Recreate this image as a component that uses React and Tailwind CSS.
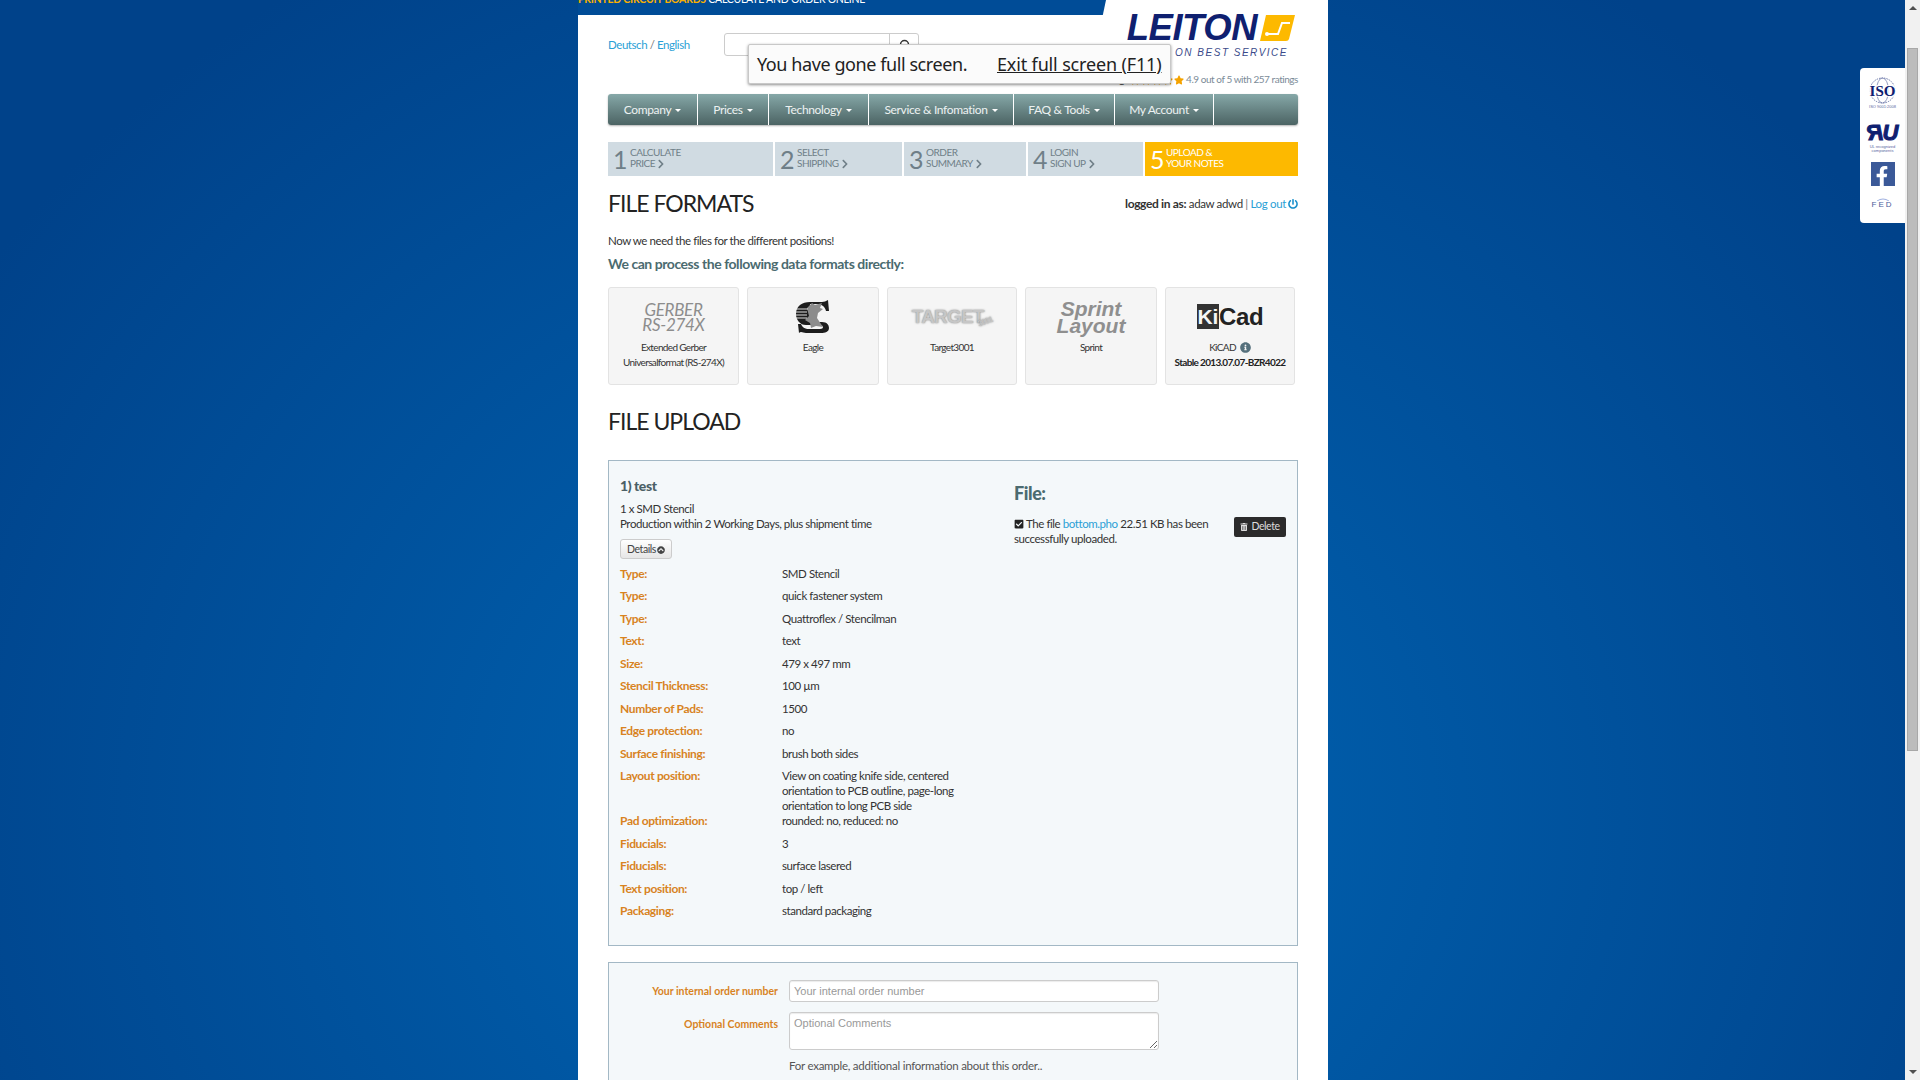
import React from 'react'
import { Search } from 'lucide-react'
import {
  FaCheckSquare,
  FaChevronCircleUp,
  FaChevronRight,
  FaFacebookF,
  FaInfoCircle,
  FaPowerOff,
  FaStar,
  FaTrashAlt,
} from 'react-icons/fa'

const navItems = [
  { label: 'Company', width: 'w-[90px]' },
  { label: 'Prices', width: 'w-[71px]' },
  { label: 'Technology', width: 'w-[100px]' },
  { label: 'Service & Infomation', width: 'w-[145px]' },
  { label: 'FAQ & Tools', width: 'w-[101px]' },
  { label: 'My Account', width: 'w-[99px]' },
]

const steps = [
  { num: 1, lines: ['Calculate', 'Price'], width: 'w-[165px]' },
  { num: 2, lines: ['Select', 'Shipping'], width: 'w-[127px]' },
  { num: 3, lines: ['Order', 'Summary'], width: 'w-[122px]' },
  { num: 4, lines: ['Login', 'Sign up'], width: 'w-[115px]' },
]

const details = [
  ['Type:', 'SMD Stencil'],
  ['Type:', 'quick fastener system'],
  ['Type:', 'Quattroflex / Stencilman'],
  ['Text:', 'text'],
  ['Size:', '479 x 497 mm'],
  ['Stencil Thickness:', '100 µm'],
  ['Number of Pads:', '1500'],
  ['Edge protection:', 'no'],
  ['Surface finishing:', 'brush both sides'],
  ['Layout position:', 'View on coating knife side, centered orientation to PCB outline, page-long orientation to long PCB side'],
  ['Pad optimization:', 'rounded: no, reduced: no'],
  ['Fiducials:', '3'],
  ['Fiducials:', 'surface lasered'],
  ['Text position:', 'top / left'],
  ['Packaging:', 'standard packaging'],
]

const EagleLogo = () => (
  <svg width="34" height="34" viewBox="0 0 34 34">
    <path d="M32 0 L33 11 L30 11 C29 7 26 4 21 4 L14 4 L13 22 L26 22 C31 22 33 25 33 28 C33 32 29 33 25 33 L10 33 C7 33 5 31 3 33 L2 24 L5 24 C6 27 9 29 13 29 L24 29 C26 29 27 28 27 27 C27 26 26 25 24 25 L10 25 C4 25 0 20 0 14 C0 6 6 2 14 2 L26 2 C28 2 30 1 32 0 Z" fill="#1d1d1d" />
    <path d="M11 8 L16 3 L19 5 L26 3 L24 8 L27 9 L22 13 L21 18 L27 27 L20 26 L15 28 L14 23 L9 20 L13 16 Z" fill="#8c8c8c" />
    <path d="M0 9 H12 M0 12 H11 M0 15 H11 M0 18 H11" stroke="#f5f5f5" strokeWidth="0.9" />
  </svg>
)

const LeitonMark = () => (
  <svg width="35" height="26" viewBox="0 0 35 26">
    <path d="M6 0 H35 L29 24 Q28.5 26 26 26 H0 Z" fill="#fdb900" />
    <path d="M30 8 H22 L18 19 H8" fill="none" stroke="#fff" strokeWidth="2" />
    <circle cx="7" cy="19" r="2" fill="#fff" />
  </svg>
)

const FormatCard = ({ logo, children, width }) => (
  <div className={`${width} h-[98px] flex flex-col items-center bg-[#f5f5f5] border border-[#e3e3e3] rounded-[3px] text-[10px] tracking-[-0.65px] leading-[15px] text-[#333]`}>
    <div className="h-[51px] w-full flex items-center justify-center pt-[6px]">{logo}</div>
    <div className="mt-[1px] text-center">{children}</div>
  </div>
)

const App = () => {
  return (
    <div className="h-screen w-full overflow-hidden flex font-['Lato',sans-serif] tracking-[-0.43px] text-[11.5px] text-[#333]">
      <main className="relative flex-1 h-full overflow-hidden bg-[radial-gradient(ellipse_1150px_1000px_at_50%_75%,#0066b5_0%,#00428a_100%)]">
        <div className="w-[750px] ml-[578px] bg-white min-h-[1300px]">
          {/* top strip */}
          <div className="w-[528px] h-[15px] overflow-hidden bg-[#004c97] [clip-path:polygon(0_0,100%_0,99.4%_100%,0_100%)]">
            <p className="-mt-[7px] leading-[13px] text-[10.5px] tracking-[-0.25px] uppercase text-white whitespace-nowrap">
              <span className="font-bold text-[#f9b000]">Printed Circuit Boards</span> Calculate and order online
            </p>
          </div>

          <div className="px-[30px]">
            {/* header */}
            <div className="h-[79px] flex justify-between">
              <div className="flex items-start pt-[18px]">
                <div className="w-[116px] leading-[24px] text-[#2a9fd6]">
                  Deutsch <span className="text-[#777]">/</span> English
                </div>
                <div className="flex w-[195px] h-[23px] border border-[#ccc] rounded-[3px] bg-white">
                  <div className="flex-1" />
                  <div className="w-[29px] flex items-center justify-center border-l border-[#ccc]">
                    <Search size={12} strokeWidth={3} className="text-[#333] -scale-x-100" />
                  </div>
                </div>
              </div>
              <div className="flex flex-col items-end">
                <div className="flex items-center h-[26px] pr-[3px] gap-[3px]">
                  <span className="font-['Liberation_Sans',sans-serif] font-bold italic text-[36.5px] leading-[26px] tracking-[-0.5px] text-[#0f2070]">LEITON</span>
                  <LeitonMark />
                </div>
                <div className="mt-[7px] pr-[10px] font-['Liberation_Sans',sans-serif] italic text-[10px] leading-[9px] tracking-[1.5px] text-[#3a4a8a]">ON BEST SERVICE</div>
                <div className="mt-[15px] flex items-center leading-[15px] text-[10px] tracking-[-0.45px] text-[#7b8b98]">
                  <span className="text-[#333] mr-[6px]">Rating</span>
                  <span className="flex gap-[1px] text-[#f5a300] mr-[2px]">
                    <FaStar size={10} />
                    <FaStar size={10} />
                    <FaStar size={10} />
                    <FaStar size={10} />
                    <FaStar size={10} />
                  </span>
                  4.9 out of 5 with 257 ratings
                </div>
              </div>
            </div>

            {/* main nav */}
            <nav className="h-[31px] flex rounded-[3px] bg-gradient-to-b from-[#86a8a8] to-[#4c6464] shadow-[0_1px_2px_rgba(0,0,0,0.3)] text-[12px] tracking-[-0.35px] text-[#edf2f2]">
              {navItems.map((item) => (
                <div key={item.label} className={`${item.width} pt-[1px] flex items-center justify-center gap-[4px] border-r border-white`}>
                  {item.label}
                  <span className="w-0 h-0 border-x-[3px] border-x-transparent border-t-[3px] border-t-white" />
                </div>
              ))}
            </nav>

            {/* order steps */}
            <div className="mt-[17px] h-[34px] flex gap-[2px] uppercase text-[10px] tracking-[-0.5px] leading-[11px] text-[#6f7f88]">
              {steps.map((step) => (
                <div key={step.num} className={`${step.width} flex items-center pl-[5px] bg-[#d0dbe2]`}>
                  <span className="w-[17px] text-[25px] leading-[34px]">{step.num}</span>
                  <div className="-mt-[2px]">
                    <div>{step.lines[0]}</div>
                    <div className="flex items-center gap-[1px]">
                      {step.lines[1]}
                      <FaChevronRight size={10} />
                    </div>
                  </div>
                </div>
              ))}
              <div className="w-[153px] flex items-center pl-[5px] bg-[#fdb900] text-white">
                <span className="w-[16px] text-[25px] leading-[34px]">5</span>
                <div className="-mt-[2px]">
                  <div>Upload &amp;</div>
                  <div>Your notes</div>
                </div>
              </div>
            </div>

            <div className="mt-[12px] h-[32px] flex items-center justify-between">
              <h1 className="pb-[2px] text-[23px] tracking-[-1px] leading-[30px] text-[#222]">FILE FORMATS</h1>
              <div className="flex items-center gap-[2px] tracking-[-0.35px]">
                <span><b className="text-[12px]">logged in as:</b> adaw adwd <span className="text-[#777]">|</span> <span className="text-[#2a9fd6]">Log out</span></span>
                <FaPowerOff size={10} className="text-[#1a90cc]" />
              </div>
            </div>

            <p className="mt-[13px] leading-[15px]">Now we need the files for the different positions!</p>
            <p className="mt-[6px] leading-[20px] text-[14px] tracking-[-0.45px] font-bold text-[#4b6b70]">We can process the following data formats directly:</p>

            <div className="mt-[13px] flex gap-[8px]">
              <FormatCard
                width="w-[131px]"
                logo={<div className="text-center italic text-[17px] leading-[15px] tracking-[-0.3px] text-[#8d8d8d]">GERBER<br />RS-274X</div>}
              >
                Extended Gerber<br />Universalformat (RS-274X)
              </FormatCard>
              <FormatCard width="w-[132px]" logo={<EagleLogo />}>Eagle</FormatCard>
              <FormatCard
                width="w-[130px]"
                logo={
                  <div className="flex items-end font-['Liberation_Sans',sans-serif] font-bold text-[19px] leading-[20px] tracking-[-0.8px] text-[#c6c6c6] [text-shadow:0_0_2px_#777]">
                    TARGET<span className="-ml-[6px] text-[8px] leading-[10px] -rotate-[20deg]">3001</span>
                  </div>
                }
              >
                Target3001
              </FormatCard>
              <FormatCard
                width="w-[132px]"
                logo={<div className="text-center font-['Liberation_Sans',sans-serif] font-bold italic text-[21px] leading-[17px] tracking-normal text-[#8f8f8f]">Sprint<br />Layout</div>}
              >
                Sprint
              </FormatCard>
              <FormatCard
                width="w-[130px]"
                logo={
                  <div className="flex items-center font-['Liberation_Sans',sans-serif] font-bold text-[24px] leading-[25px] tracking-[-0.3px] text-[#222]">
                    <span className="h-[25px] flex items-center bg-[#333] text-[#f5f5f5] px-[1px] text-[21px]">Ki</span>Cad
                  </div>
                }
              >
                <span className="inline-flex items-center gap-[4px]">KiCAD <FaInfoCircle size={11} className="text-[#55707c]" /></span>
                <br />
                <b className="text-[#222]">Stable 2013.07.07-BZR4022</b>
              </FormatCard>
            </div>

            <h1 className="mt-[21px] h-[32px] text-[23px] tracking-[-1px] leading-[30px] text-[#222]">FILE UPLOAD</h1>

            {/* position box */}
            <section className="mt-[22px] h-[486px] flex border border-[#a3b8c5] bg-[#f4f8fa] pt-[15px] pl-[11px] pr-[11px]">
              <div className="w-[394px] shrink-0">
                <h3 className="leading-[20px] text-[14px] font-black text-[#4b5f66]">1) test</h3>
                <p className="mt-[4.5px] leading-[15px]">1 x SMD Stencil<br />Production within 2 Working Days, plus shipment time</p>
                <div className="mt-[8.5px] w-[52px] h-[20px] pt-[1px] flex items-center justify-center gap-[1px] rounded-[3px] border border-[#ccc] bg-gradient-to-b from-white to-[#e6e6e6] text-[10.5px] text-[#444]">
                  Details <FaChevronCircleUp size={8} />
                </div>
                <div className="mt-[6.5px]">
                  {details.map(([label, value], i) => (
                    <div key={i} className={`flex leading-[15px] ${value.length > 60 ? '' : 'min-h-[22.5px]'}`}>
                      <div className="w-[162px] shrink-0 font-bold text-[12px] tracking-[-0.35px] text-[#d8831f]">{label}</div>
                      <div className="w-[190px]">{value}</div>
                    </div>
                  ))}
                </div>
              </div>
              <div className="flex-1">
                <h3 className="mt-[5px] leading-[24px] text-[18px] font-black text-[#4b6b70]">File:</h3>
                <div className="mt-[10.5px] flex justify-between">
                  <p className="w-[200px] leading-[15px]">
                    <FaCheckSquare size={10} className="inline -mt-[2px] mr-[2px] text-[#222]" />
                    The file <span className="text-[#2a9fd6]">bottom.pho</span> 22.51 KB has been successfully uploaded.
                  </p>
                  <div className="mt-[1px] w-[52px] h-[20px] flex items-center justify-center gap-[3px] rounded-[2px] bg-[#2b2b2b] text-[10.5px] text-[#ddd]">
                    <FaTrashAlt size={8} /> Delete
                  </div>
                </div>
              </div>
            </section>

            {/* order notes */}
            <section className="mt-[16px] h-[300px] border border-[#a3b8c5] bg-[#f4f8fa] pt-[17px]">
              <div className="flex items-center">
                <label className="w-[169px] pt-[2px] text-right font-bold text-[10.5px] tracking-normal text-[#d8831f]">Your internal order number</label>
                <input
                  readOnly
                  placeholder="Your internal order number"
                  className="ml-[11px] w-[370px] h-[22px] px-[4px] bg-white border border-[#ccc] rounded-[3px] font-['Liberation_Sans',sans-serif] tracking-normal text-[11px] placeholder:text-[#999] shadow-[inset_0_1px_1px_rgba(0,0,0,0.08)]"
                />
              </div>
              <div className="mt-[10px] flex items-start">
                <label className="w-[169px] pt-[5px] text-right font-bold text-[10.5px] tracking-normal text-[#d8831f]">Optional Comments</label>
                <textarea
                  readOnly
                  placeholder="Optional Comments"
                  className="ml-[11px] w-[370px] h-[38px] px-[4px] py-[2px] bg-white border border-[#ccc] rounded-[3px] font-['Liberation_Sans',sans-serif] tracking-normal text-[11px] placeholder:text-[#999] shadow-[inset_0_1px_1px_rgba(0,0,0,0.08)]"
                />
              </div>
              <p className="mt-[7.5px] ml-[180px] leading-[15px] tracking-[-0.25px] text-[#555]">For example, additional information about this order..</p>
            </section>
          </div>
        </div>

        {/* fullscreen notice */}
        <div className="absolute left-[748px] top-[44px] w-[423px] h-[40px] flex items-center pl-[8px] bg-[#fbfbfb] border border-[#c8c8c8] rounded-[2px] shadow-[0_1px_3px_rgba(0,0,0,0.45)] font-['Noto_Sans',sans-serif] tracking-normal text-[18px] text-[#222]">
          <span className="w-[240px] tracking-[-0.42px]">You have gone full screen.</span>
          <span className="underline tracking-[-0.15px]">Exit full screen (F11)</span>
        </div>

        {/* side badges */}
        <aside className="absolute right-0 top-[68px] w-[45px] h-[155px] rounded-l-[4px] bg-white flex flex-col items-center pt-[9px] text-[#0f2070] font-['Liberation_Sans',sans-serif] tracking-normal">
          <div className="relative w-[30px] h-[27px] flex items-center justify-center">
            <svg width="27" height="27" viewBox="0 0 27 27" className="absolute">
              <circle cx="13.5" cy="13.5" r="12.5" fill="none" stroke="#6a76a8" strokeWidth="1" strokeDasharray="1.5 1" />
              <ellipse cx="13.5" cy="13.5" rx="6" ry="12.5" fill="none" stroke="#6a76a8" strokeWidth="0.7" />
            </svg>
            <span className="relative px-[1px] font-['Liberation_Serif',serif] font-bold text-[15px] leading-[12px] bg-white/80">ISO</span>
          </div>
          <div className="h-[5px] text-[4px] leading-[5px] text-[#5a66a0] whitespace-nowrap">ISO 9001:2008</div>
          <div className="mt-[14px] h-[20px] flex font-bold italic text-[22px] leading-[20px] [-webkit-text-stroke:1px_#0f2070]">
            <span className="-scale-x-100">R</span><span>U</span>
          </div>
          <div className="mt-[2px] h-[8px] text-center text-[4px] leading-[4px] text-[#5a66a0] whitespace-nowrap">UL recognized<br />components</div>
          <div className="mt-[9px] w-[24px] h-[24px] flex items-end justify-end pr-[3px] bg-[#3b5998] text-white">
            <FaFacebookF size={20} />
          </div>
          <svg width="14" height="3" viewBox="0 0 14 3" className="mt-[12px]">
            <path d="M1 3 Q7 -1 13 3" fill="none" stroke="#9fb0e0" strokeWidth="1" />
          </svg>
          <div className="text-[8px] leading-[8px] tracking-[2px] text-[#4a5a9a]">FED</div>
        </aside>
      </main>

      {/* scrollbar */}
      <div className="w-[15px] h-full shrink-0 flex flex-col items-center bg-[#f1f1f1]">
        <div className="mt-[6px] w-0 h-0 border-x-[4px] border-x-transparent border-b-[4px] border-b-[#505050]" />
        <div className="mt-[38px] w-[11px] h-[703px] bg-[#bcbcbc] border border-[#a8a8a8]" />
        <div className="mt-auto mb-[6px] w-0 h-0 border-x-[4px] border-x-transparent border-t-[4px] border-t-[#505050]" />
      </div>
    </div>
  )
}

export default App
